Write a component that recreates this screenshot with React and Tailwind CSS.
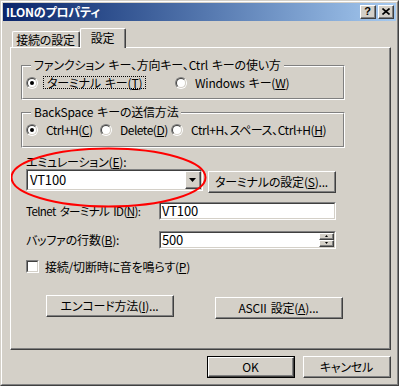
import React from "react";

const FONT = "font-['Noto_Sans_CJK_JP',sans-serif] [font-feature-settings:'palt']";

function Sp() {
  return <span className="inline-block w-[4px]" />;
}

function Raised({ className = "", children, innerClass = "" }) {
  return (
    <div className={`border border-t-white border-l-white border-b-[#404040] border-r-[#404040] bg-[#D4D0C8] ${className}`}>
      <div className={`flex h-full w-full items-center justify-center border-r border-b border-r-[#808080] border-b-[#808080] ${innerClass}`}>
        {children}
      </div>
    </div>
  );
}

function Sunken({ className = "", children, innerClass = "" }) {
  return (
    <div className={`border border-t-[#808080] border-l-[#808080] border-b-white border-r-white ${className}`}>
      <div className={`flex h-full w-full items-center border border-t-[#404040] border-l-[#404040] border-b-[#D4D0C8] border-r-[#D4D0C8] bg-white ${innerClass}`}>
        {children}
      </div>
    </div>
  );
}

function Radio({ checked }) {
  return (
    <div className="h-[12px] w-[12px] shrink-0 rounded-full border border-t-[#808080] border-l-[#808080] border-b-white border-r-white">
      <div className="flex h-full w-full items-center justify-center rounded-full border border-t-[#404040] border-l-[#404040] border-b-[#D4D0C8] border-r-[#D4D0C8] bg-white">
        {checked && <div className="h-[4px] w-[4px] rounded-full bg-black" />}
      </div>
    </div>
  );
}

function Group({ label, className = "", children }) {
  return (
    <div className={`relative border border-t-[#808080] border-l-[#808080] border-b-white border-r-white ${className}`}>
      <div className="flex h-full w-full items-center border border-t-white border-l-white border-b-[#808080] border-r-[#808080] pl-[1px]">
        {children}
      </div>
      <span className="absolute -top-[8px] left-[9px] bg-[#D4D0C8] px-[3px] leading-[14px] whitespace-nowrap">{label}</span>
    </div>
  );
}

function Triangle({ w = 7, h = 4 }) {
  return (
    <svg width={w} height={h} viewBox={`0 0 ${w} ${h}`}>
      <polygon points={`0,0 ${w},0 ${w / 2},${h}`} fill="black" />
    </svg>
  );
}

export default function App() {
  return (
    <div className={`h-[386px] w-[399px] bg-[#D4D0C8] text-[12px] leading-[14px] tracking-[-0.2px] text-black ${FONT}`}>
      <div className="h-full w-full border border-t-[#D4D0C8] border-l-[#D4D0C8] border-b-[#404040] border-r-[#404040]">
        <div className="flex h-full w-full flex-col border border-t-white border-l-white border-b-[#808080] border-r-[#808080] p-[1px]">
          {/* Title bar */}
          <div className="flex h-[18px] shrink-0 items-center justify-between bg-gradient-to-r from-[#0A246A] to-[#A6CAF0] pl-[3px] pr-[2px]">
            <span className="text-[12px] font-bold leading-[14px] text-white">ILONのプロパティ</span>
            <div className="flex gap-[2px]">
              <Raised className="h-[14px] w-[16px]">
                <span className="font-['Liberation_Sans',sans-serif] text-[11px] font-bold leading-[11px]">?</span>
              </Raised>
              <Raised className="h-[14px] w-[16px]">
                <svg width="8" height="7" viewBox="0 0 8 7">
                  <path d="M0.5 0.5 L7.5 6.5 M7.5 0.5 L0.5 6.5" stroke="black" strokeWidth="1.6" />
                </svg>
              </Raised>
            </div>
          </div>

          {/* Tabs */}
          <div className="flex h-[26px] shrink-0 items-end pl-[9px]">
            <div className="flex h-[16px] w-[68px] items-center justify-center rounded-t-[2px] border-t border-l border-r border-t-white border-l-white border-r-[#404040]">
              <div className="flex h-full w-full items-center justify-center border-r border-r-[#808080] pt-[1px]">接続の設定</div>
            </div>
            <div className="relative z-10 -mb-[1px] flex h-[20px] w-[46px] items-start justify-center rounded-t-[2px] border-t border-l border-r border-t-white border-l-white border-r-[#404040] bg-[#D4D0C8]">
              <div className="flex h-full w-full justify-center border-r border-r-[#808080] pt-[2px]">設定</div>
            </div>
          </div>

          {/* Panel */}
          <div className="ml-[7px] h-[303px] w-[381px] shrink-0 border border-t-white border-l-white border-b-[#404040] border-r-[#404040]">
            <div className="relative flex h-full w-full flex-col border-r border-b border-r-[#808080] border-b-[#808080] pl-[10px]">
              <Group
                label={<>ファンクション<Sp />キー、方向キー、Ctrl<Sp />キーの使い方</>}
                className="mt-[17px] h-[35px] w-[324px]"
              >
                <div className="flex w-[151px] items-center pl-[2px]">
                  <Radio checked />
                  <span className="ml-[5px] flex h-[13px] items-center whitespace-nowrap border border-dotted border-black px-[3px]">
                    ターミナル<Sp />キー(<u>T</u>)
                  </span>
                </div>
                <div className="flex items-center">
                  <Radio />
                  <span className="ml-[8px] whitespace-nowrap">Windows<Sp />キー(<u>W</u>)</span>
                </div>
              </Group>

              <Group label={<>BackSpace<Sp />キーの送信方法</>} className="mt-[12px] h-[36px] w-[324px]">
                <div className="flex w-[76px] items-center pl-[2px]">
                  <Radio checked />
                  <span className="ml-[8px] tracking-[-0.5px]">Ctrl+H(<u>C</u>)</span>
                </div>
                <div className="flex w-[71px] items-center">
                  <Radio />
                  <span className="ml-[8px] tracking-[-0.5px]">Delete(<u>D</u>)</span>
                </div>
                <div className="flex items-center">
                  <Radio />
                  <span className="ml-[8px] whitespace-nowrap tracking-[-0.4px]">Ctrl+H、スペース、Ctrl+H(<u>H</u>)</span>
                </div>
              </Group>

              <div className="mt-[7px] h-[14px] pl-[5px]">エミュレーション(<u>E</u>):</div>

              <div className="flex items-start pl-[5px]">
                <Sunken className="h-[22px] w-[177px]" innerClass="justify-between pl-[2px] pr-0">
                  <span className="text-[13px]">VT100</span>
                  <Raised className="h-[18px] w-[16px]">
                    <Triangle />
                  </Raised>
                </Sunken>
                <Raised className="ml-[5px] mt-[2px] h-[22px] w-[128px]">
                  <span>ターミナルの設定(<u>S</u>)...</span>
                </Raised>
              </div>

              <div className="mt-[9px] flex items-center pl-[5px]">
                <span className="w-[133px] whitespace-nowrap text-[11.5px] tracking-[-0.6px]">Telnet<Sp />ターミナル<Sp />ID(<u>N</u>):</span>
                <Sunken className="h-[18px] w-[177px]" innerClass="pl-[1px]">
                  <span className="text-[13px]">VT100</span>
                </Sunken>
              </div>

              <div className="mt-[11px] flex items-center pl-[5px]">
                <span className="w-[133px] whitespace-nowrap">バッファの行数(<u>B</u>):</span>
                <Sunken className="h-[18px] w-[177px]" innerClass="justify-between pl-[1px]">
                  <span className="text-[13px]">500</span>
                  <div className="flex flex-col">
                    <Raised className="h-[7px] w-[15px]">
                      <svg width="3" height="2" viewBox="0 0 3 2"><polygon points="1.5,0 3,2 0,2" fill="black" /></svg>
                    </Raised>
                    <Raised className="h-[7px] w-[15px]">
                      <svg width="3" height="2" viewBox="0 0 3 2"><polygon points="0,0 3,0 1.5,2" fill="black" /></svg>
                    </Raised>
                  </div>
                </Sunken>
              </div>

              <div className="mt-[11px] flex h-[13px] items-center pl-[5px]">
                <Sunken className="h-[13px] w-[13px]" />
                <span className="ml-[6px]">接続/切断時に音を鳴らす(<u>P</u>)</span>
              </div>

              <div className="mt-[22px] flex items-start pl-[5px]">
                <Raised className="ml-[20px] h-[22px] w-[128px]">
                  <span>エンコード方法(<u>I</u>)...</span>
                </Raised>
                <Raised className="ml-[41px] mt-[2px] h-[22px] w-[128px]">
                  <span className="whitespace-nowrap">ASCII<Sp />設定(<u>A</u>)...</span>
                </Raised>
              </div>

              <svg className="pointer-events-none absolute left-0 top-0" width="381" height="303" viewBox="0 0 381 303">
                <ellipse cx="97.5" cy="129.5" rx="97" ry="29" fill="none" stroke="#FF0000" strokeWidth="2" />
              </svg>
            </div>
          </div>

          {/* Bottom buttons */}
          <div className="mt-[6px] flex justify-end gap-[8px] pr-[5px]">
            <div className="h-[22px] w-[88px] border border-black">
              <Raised className="h-full w-full">OK</Raised>
            </div>
            <Raised className="h-[22px] w-[88px]">キャンセル</Raised>
          </div>
        </div>
      </div>
    </div>
  );
}
